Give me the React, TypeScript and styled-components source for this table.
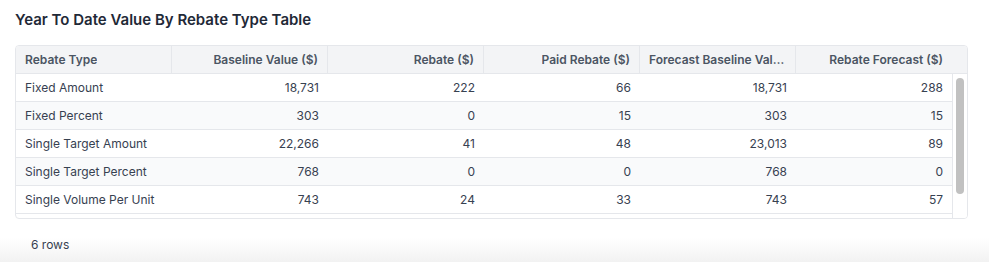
import styled, { createGlobalStyle } from "styled-components"

const GlobalStyle = createGlobalStyle`
  html, body {
    margin: 0;
    padding: 0;
    background: #ffffff;
  }
  * {
    box-sizing: border-box;
  }
`

const Page = styled.div`
  height: 262px;
  padding: 10px 21px 0 15px;
  display: flex;
  flex-direction: column;
  font-family: Inter, "Noto Sans", sans-serif;
  background: linear-gradient(to bottom, #ffffff 0, #ffffff 238px, #f2f2f2 262px);
`

const Title = styled.h2`
  margin: 0;
  font-size: 15px;
  line-height: 20px;
  font-weight: 600;
  color: #1f2937;
`

const TableBox = styled.div`
  margin-top: 15px;
  border: 1px solid #e5e7eb;
  border-radius: 4px;
  overflow: hidden;
  font-size: 12px;
`

const HeaderRow = styled.div`
  display: grid;
  grid-template-columns: repeat(6, 1fr) 15px;
  height: 28px;
  background: #f3f4f6;
  border-bottom: 1px solid #e5e7eb;
`

const HeaderCell = styled.div<{ $align?: "left" | "right"; $last?: boolean }>`
  display: flex;
  align-items: center;
  justify-content: ${p => (p.$align === "left" ? "flex-start" : "flex-end")};
  padding: 0 9px;
  border-right: ${p => (p.$last ? "none" : "1px solid #e5e7eb")};
  font-weight: 600;
  color: #4b5563;
  min-width: 0;
  overflow: hidden;

  span {
    white-space: nowrap;
    overflow: hidden;
    text-overflow: ellipsis;
  }
`

const Body = styled.div`
  display: grid;
  grid-template-columns: 1fr 15px;
  height: 144px;
  overflow: hidden;
`

const Rows = styled.div`
  display: flex;
  flex-direction: column;
`

const Row = styled.div<{ $striped: boolean }>`
  display: grid;
  grid-template-columns: repeat(6, 1fr);
  height: 28px;
  flex: none;
  background: ${p => (p.$striped ? "#f9fafb" : "#ffffff")};
  border-bottom: 1px solid #e5e7eb;
`

const Cell = styled.div<{ $align?: "left" | "right" }>`
  display: flex;
  align-items: center;
  justify-content: ${p => (p.$align === "left" ? "flex-start" : "flex-end")};
  padding: 0 9px;
  color: #374151;
  white-space: nowrap;
`

const Track = styled.div`
  background: #ffffff;
  border-left: 1px solid #e5e7eb;
  padding: 4px 3px 0 3px;
`

const Thumb = styled.div`
  height: 116px;
  border-radius: 4px;
  background: #c1c1c1;
`

const RowCount = styled.div`
  padding: 17px 0 0 16px;
  font-size: 12px;
  line-height: 18px;
  color: #374151;
`

const columns = [
  "Rebate Type",
  "Baseline Value ($)",
  "Rebate ($)",
  "Paid Rebate ($)",
  "Forecast Baseline Value ($)",
  "Rebate Forecast ($)",
]

const rows: [string, string, string, string, string, string][] = [
  ["Fixed Amount", "18,731", "222", "66", "18,731", "288"],
  ["Fixed Percent", "303", "0", "15", "303", "15"],
  ["Single Target Amount", "22,266", "41", "48", "23,013", "89"],
  ["Single Target Percent", "768", "0", "0", "768", "0"],
  ["Single Volume Per Unit", "743", "24", "33", "743", "57"],
]

export default function App() {
  return (
    <>
      <GlobalStyle />
      <Page>
        <Title>Year To Date Value By Rebate Type Table</Title>
        <TableBox>
          <HeaderRow>
            {columns.map((c, i) => (
              <HeaderCell key={c} $align={i === 0 ? "left" : "right"} $last={i === columns.length - 1}>
                <span title={c}>{c}</span>
              </HeaderCell>
            ))}
            <div />
          </HeaderRow>
          <Body>
            <Rows>
              {rows.map((r, i) => (
                <Row key={r[0]} $striped={i % 2 === 1}>
                  {r.map((v, j) => (
                    <Cell key={j} $align={j === 0 ? "left" : "right"}>{v}</Cell>
                  ))}
                </Row>
              ))}
            </Rows>
            <Track>
              <Thumb />
            </Track>
          </Body>
        </TableBox>
        <RowCount>6 rows</RowCount>
      </Page>
    </>
  )
}
